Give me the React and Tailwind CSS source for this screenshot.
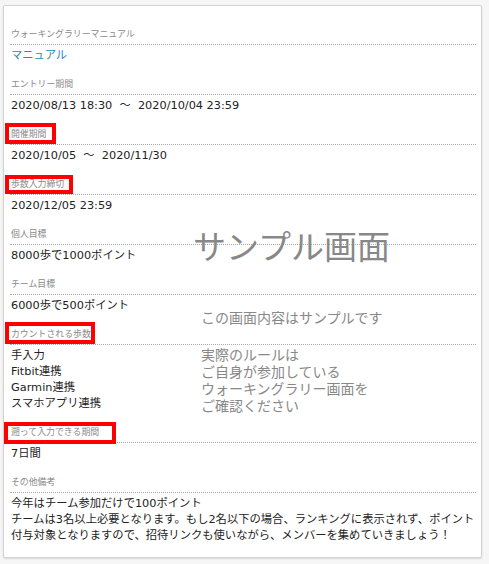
import React from "react";

const FONT = { fontFamily: '"DejaVu Sans", "Noto Sans CJK JP", sans-serif' };
const JP = { fontFamily: '"Noto Sans CJK JP", "DejaVu Sans", sans-serif' };

const sections = [
  { label: "ウォーキングラリーマニュアル", lines: ["マニュアル"], accent: true },
  { label: "エントリー期間", lines: ["2020/08/13 18:30 \u00a0～\u00a0 2020/10/04 23:59"] },
  { label: "開催期間", lines: ["2020/10/05 \u00a0～\u00a0 2020/11/30"], box: "-left-[5px] -top-[5px] w-[51px] h-[21px]" },
  { label: "歩数入力締切", lines: ["2020/12/05 23:59"], box: "-left-[5px] -top-[3px] w-[68px] h-[19px]" },
  { label: "個人目標", lines: ["8000歩で1000ポイント"] },
  { label: "チーム目標", lines: ["6000歩で500ポイント"] },
  {
    label: "カウントされる歩数",
    lines: ["手入力", "Fitbit連携", "Garmin連携", "スマホアプリ連携"],
    box: "-left-[5px] -top-[6px] w-[90px] h-[22px]",
  },
  { label: "遡って入力できる期間", lines: ["7日間"], box: "-left-[6px] -top-[4px] w-[112px] h-[22px]" },
  {
    label: "その他備考",
    lines: [
      "今年はチーム参加だけで100ポイント",
      "チームは3名以上必要となります。もし2名以下の場合、ランキングに表示されず、ポイント",
      "付与対象となりますので、招待リンクも使いながら、メンバーを集めていきましょう！",
    ],
  },
];

function Section({ label, lines, accent, box }) {
  return (
    <div className="flex flex-col">
      <div className="relative px-[1px] pb-[4px] border-b border-dotted border-[#a8a8a8] text-[8.9px] leading-[12px] text-[#8a8a8a] whitespace-nowrap">
        {label}
        {box && <div className={"absolute border-[4px] border-[#ff0000] " + box} />}
      </div>
      <div
        className={
          "flex flex-col px-[1px] pt-[3px] text-[11.3px] leading-[16px] " +
          (accent ? "text-[#2a88b2]" : "text-[#222222]")
        }
      >
        {lines.map((l, i) => (
          <div key={i} className="whitespace-nowrap">
            {l}
          </div>
        ))}
      </div>
    </div>
  );
}

export default function App() {
  return (
    <div className="relative w-[489px] h-[564px] bg-[#f6f6f6] overflow-hidden pt-[5px] pl-[3px]" style={FONT}>
      <div className="w-[479px] h-[553px] bg-white border border-[#d2d2d2] rounded-[2px] shadow-[0_1px_2px_rgba(0,0,0,0.12)] pl-[6px] pr-[5px] pt-[22px] flex flex-col gap-[14px]">
        {sections.map((s, i) => (
          <Section key={i} {...s} />
        ))}
      </div>

      {/* sample watermark overlay */}
      <div className="absolute left-[193px] top-[226px] flex flex-col text-[#888888] pointer-events-none" style={JP}>
        <div className="text-[33px] leading-[38px] whitespace-nowrap">サンプル画面</div>
        <div className="mt-[45px] ml-[8px] text-[14px] leading-[17px] whitespace-nowrap">この画面内容はサンプルです</div>
        <div className="mt-[20px] ml-[8px] flex flex-col text-[14px] leading-[17px] whitespace-nowrap">
          <div>実際のルールは</div>
          <div>ご自身が参加している</div>
          <div>ウォーキングラリー画面を</div>
          <div>ご確認ください</div>
        </div>
      </div>
    </div>
  );
}
